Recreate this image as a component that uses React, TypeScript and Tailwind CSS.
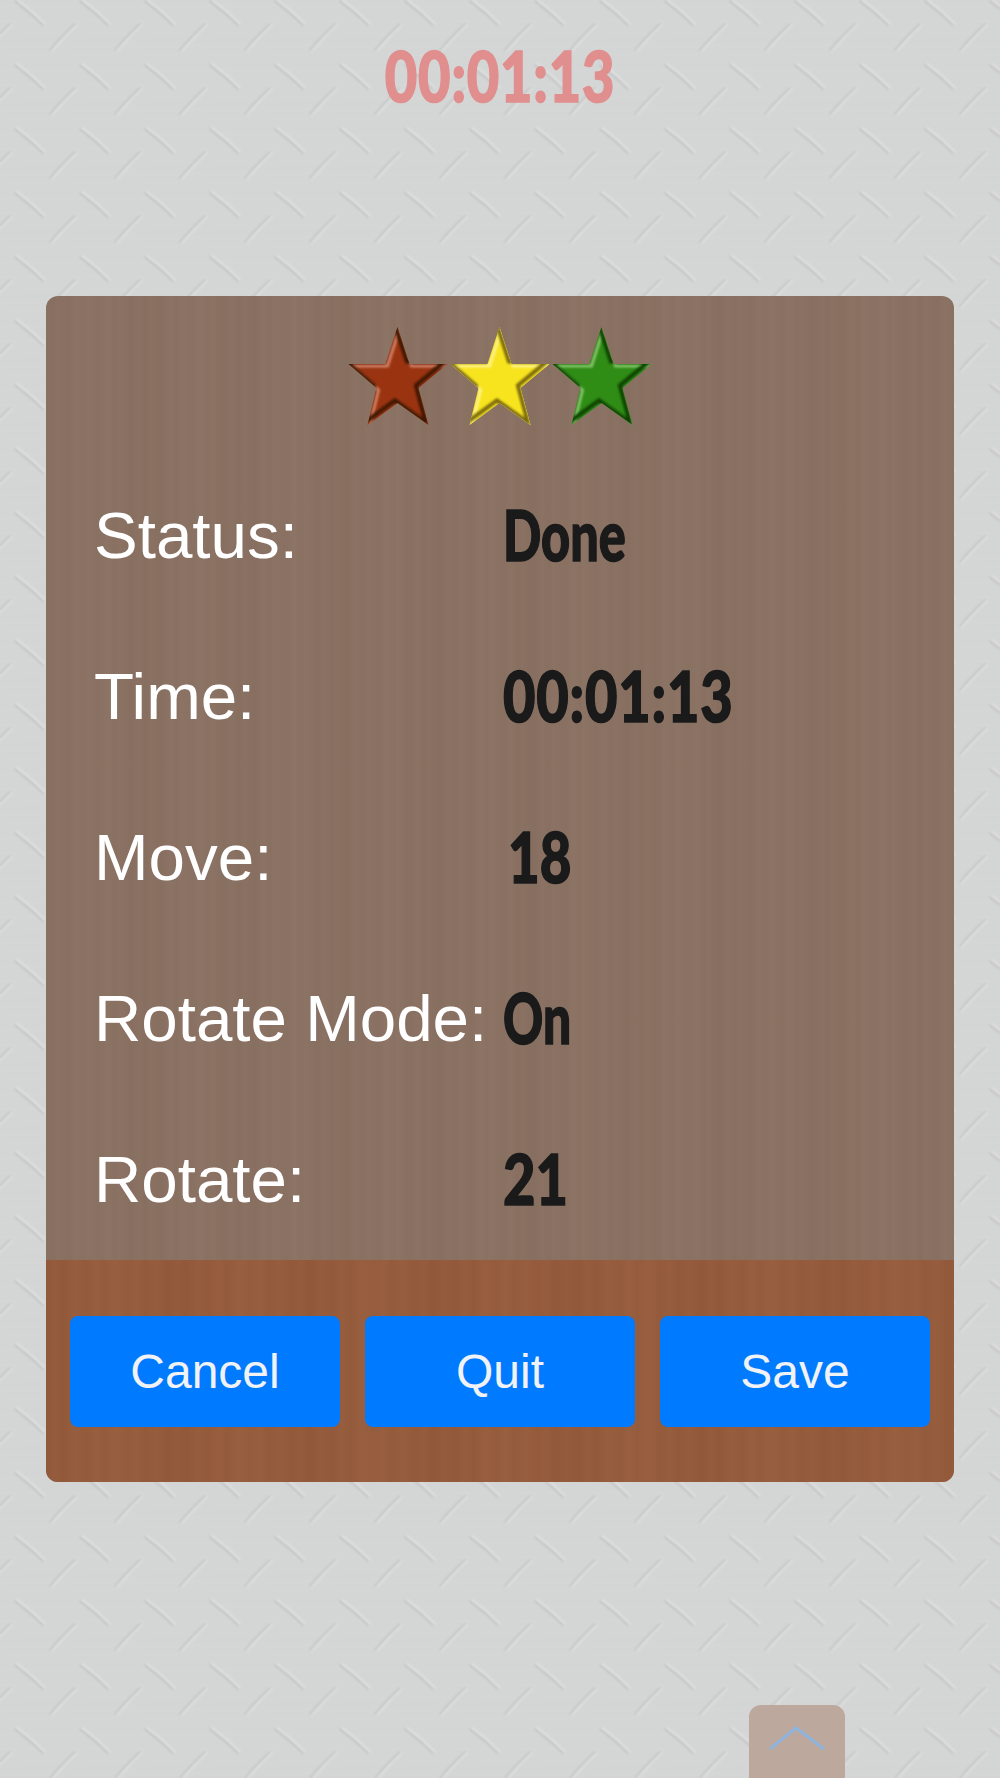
const rows = [
  { label: 'Status:', value: 'Done', vw: 'scale-x-[0.72]' },
  { label: 'Time:', value: '00:01:13', vw: 'scale-x-[0.8] tracking-[1px]' },
  { label: 'Move:', value: '18', vw: 'ml-[5px] scale-x-[0.78]' },
  { label: 'Rotate Mode:', value: 'On', vw: 'scale-x-[0.71]' },
  { label: 'Rotate:', value: '21', vw: 'scale-x-[0.8]' },
];

const STAR = '49,0 61,37 99,37 70,61 80,98 49,76 19,98 28,61 0,37 37,37';

function Star({ id, base, light, dark }: { id: string; base: string; light: string; dark: string }) {
  return (
    <svg viewBox="0 0 99 98" className="h-[98px] w-[100px]">
      <defs>
        <clipPath id={`clip-${id}`}>
          <polygon points={STAR} />
        </clipPath>
        <filter id={`blur-${id}`} x="-20%" y="-20%" width="140%" height="140%">
          <feGaussianBlur stdDeviation="1" />
        </filter>
      </defs>
      <g clipPath={`url(#clip-${id})`}>
        <rect width="99" height="98" fill={base} />
        <polygon
          points={STAR}
          fill="none"
          stroke={light}
          strokeWidth="3"
          filter={`url(#blur-${id})`}
          transform="translate(2 2)"
        />
        <polygon
          points={STAR}
          fill="none"
          stroke={dark}
          strokeWidth="4"
          filter={`url(#blur-${id})`}
          transform="translate(-2.6 -2.6)"
        />
      </g>
    </svg>
  );
}

function Background() {
  return (
    <svg className="pointer-events-none absolute inset-0 h-full w-full">
      <defs>
        <filter id="soft" x="-10%" y="-10%" width="120%" height="120%">
          <feGaussianBlur stdDeviation="0.9" />
        </filter>
        <pattern id="plate" x="-2" y="-3" width="65" height="64" patternUnits="userSpaceOnUse">
          <g stroke="#ffffff" strokeOpacity="0.08">
            <path d="M0 9H65M0 24H40M20 37H65M0 49H65M10 58H50" />
          </g>
          <g fill="none" strokeLinecap="round">
            <path d="M17 4 Q32 15 45 28" stroke="#bdbebe" strokeWidth="1.6" />
            <path d="M19 3 Q34 14 47 27" stroke="#e4e4e4" strokeWidth="1.6" />
            <path d="M52 53 Q64 39 77 27" stroke="#c0c1c1" strokeWidth="1.6" />
            <path d="M-13 53 Q-1 39 12 27" stroke="#c0c1c1" strokeWidth="1.6" />
            <path d="M54 54 Q66 40 79 28" stroke="#e2e2e2" strokeWidth="1.6" />
            <path d="M-11 54 Q1 40 14 28" stroke="#e2e2e2" strokeWidth="1.6" />
          </g>
        </pattern>
      </defs>
      <rect width="100%" height="100%" fill="url(#plate)" filter="url(#soft)" />
    </svg>
  );
}

export default function App() {
  return (
    <div className="relative flex h-[1778px] w-[1000px] flex-col overflow-hidden bg-[#d4d5d5] font-['Liberation_Sans',Arial,sans-serif]">
      <Background />

      <div className="relative flex h-[296px] justify-center pt-[31px]">
        <div className="h-fit origin-center scale-x-[0.8] font-['Lato',sans-serif] text-[70px] leading-[88px] font-black tracking-[1px] text-[#e08e8e] [-webkit-text-stroke:1.5px_#e08e8e]">
          00:01:13
        </div>
      </div>

      <div className="relative mx-[46px] overflow-hidden rounded-xl bg-[#8a7162] bg-[repeating-linear-gradient(90deg,rgba(255,255,255,0.012)_0px,rgba(0,0,0,0.012)_7px,rgba(255,255,255,0.008)_11px,rgba(0,0,0,0.014)_23px,rgba(255,255,255,0.012)_31px),repeating-linear-gradient(90deg,rgba(0,0,0,0.012)_0px,rgba(255,255,255,0.012)_53px,rgba(0,0,0,0.012)_97px)]">
        <div className="flex h-[159px] justify-center pt-[31px]">
          <Star id="red" base="#9a3410" light="#cf8168" dark="#3e1506" />
          <div className="w-[2px]" />
          <Star id="yellow" base="#f8e41e" light="#fdf28a" dark="#7d6c0c" />
          <div className="w-[2px]" />
          <Star id="green" base="#2f8c14" light="#85c46c" dark="#0b4204" />
        </div>

        <div className="flex flex-col pl-[48px]">
          {rows.map(r => (
            <div key={r.label} className="flex h-[161px] items-center">
              <span className="w-[409px] shrink-0 text-[65.5px] leading-none text-white">{r.label}</span>
              <span
                className={`-mt-1 origin-left font-['Lato',sans-serif] text-[70px] leading-none font-black text-[#1a1a1a] [-webkit-text-stroke:1.5px_#1a1a1a] ${r.vw}`}
              >
                {r.value}
              </span>
            </div>
          ))}
        </div>

        <div className="flex h-[222px] gap-[25px] bg-[#965b3b] bg-[repeating-linear-gradient(90deg,rgba(0,0,0,0.015)_0px,rgba(255,255,255,0.012)_9px,rgba(0,0,0,0.02)_17px,rgba(255,255,255,0.012)_29px,rgba(0,0,0,0.015)_41px),repeating-linear-gradient(90deg,rgba(0,0,0,0.02)_0px,rgba(255,255,255,0.015)_67px,rgba(0,0,0,0.02)_131px)] px-6 pt-14">
          {['Cancel', 'Quit', 'Save'].map(b => (
            <div
              key={b}
              className="flex h-[111px] flex-1 items-center justify-center rounded-lg bg-[#007aff] text-5xl text-[#f0f2f5]"
            >
              {b}
            </div>
          ))}
        </div>
      </div>

      <div className="relative mt-auto ml-[749px] flex h-[73px] w-[96px] justify-center rounded-t-xl bg-[#bca89c] pt-[21px]">
        <svg viewBox="0 0 56 24" className="h-6 w-14" fill="none" stroke="#8fb4dd" strokeWidth="3">
          <path d="M1 23 L27 2 L55 23" />
        </svg>
      </div>
    </div>
  );
}
